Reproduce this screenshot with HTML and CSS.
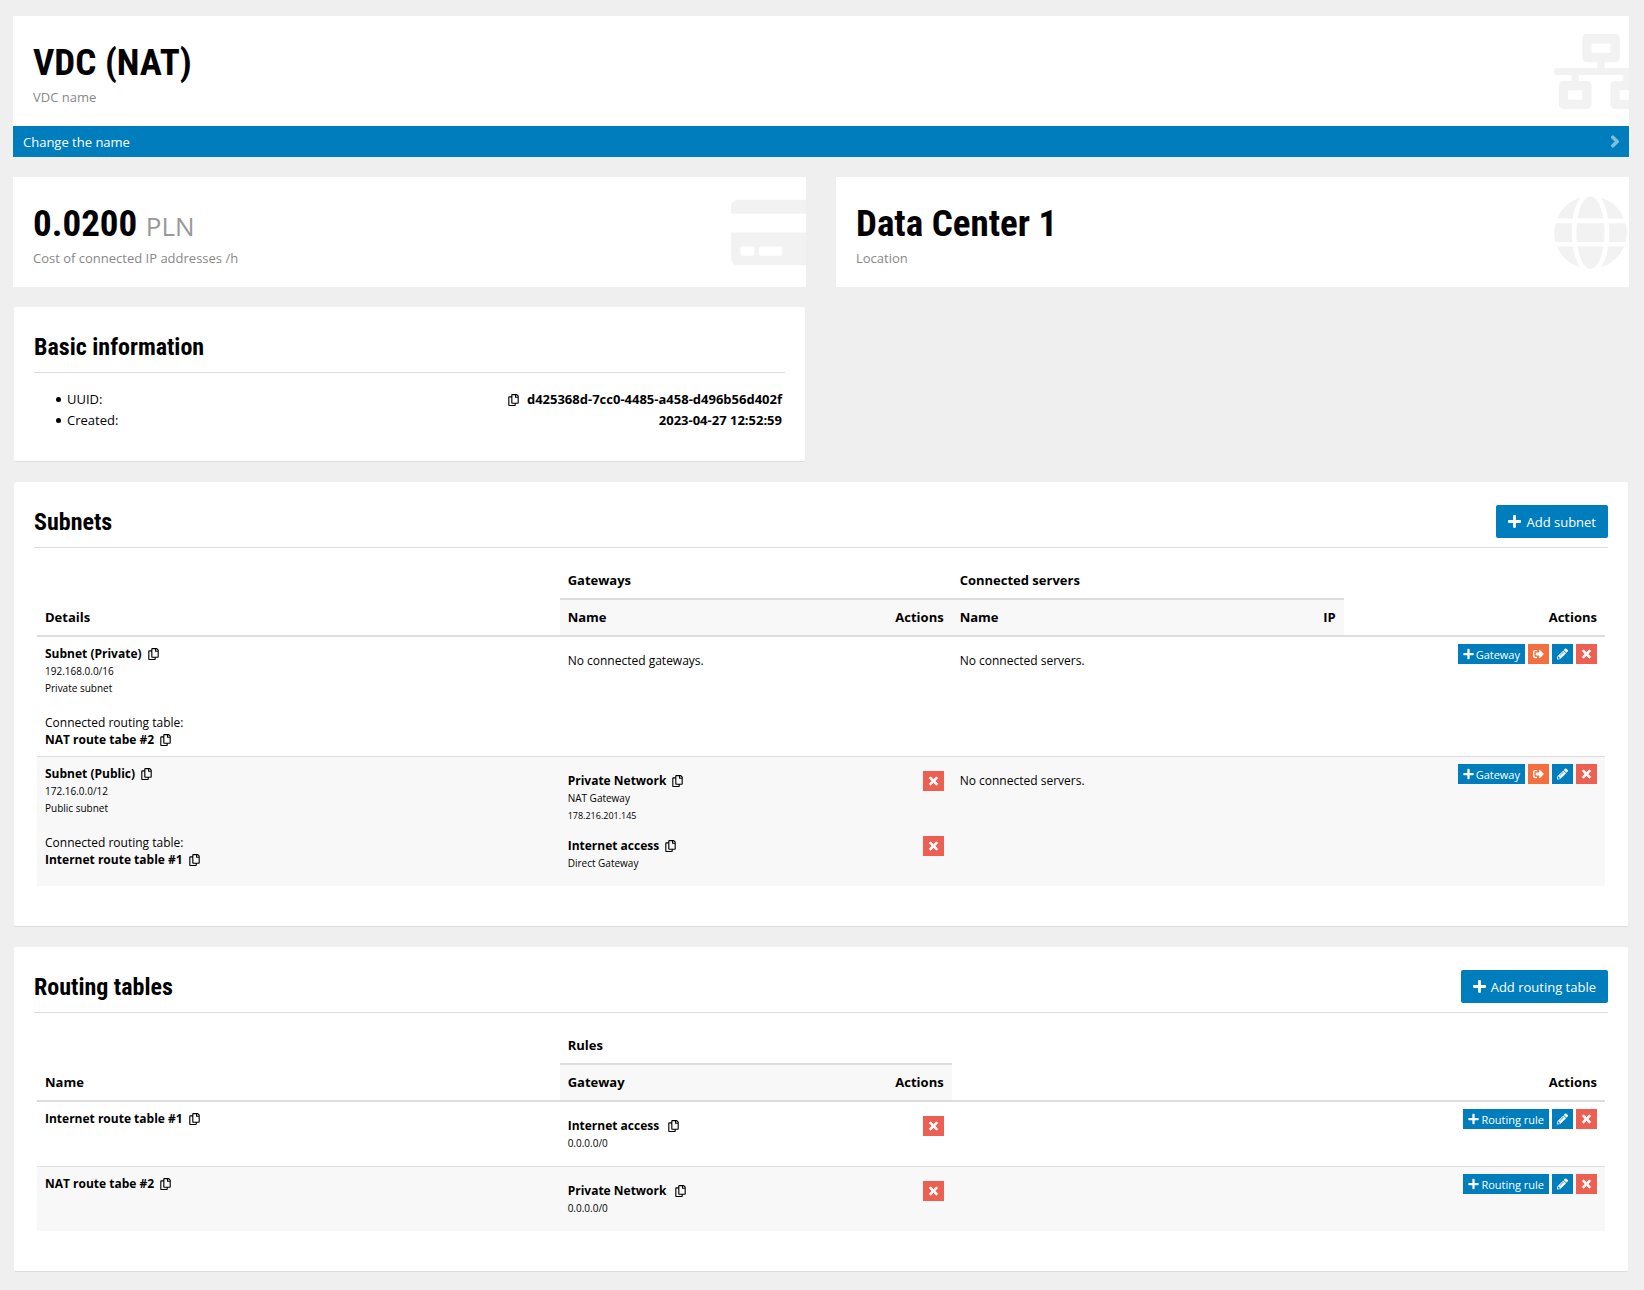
FILE: index.html
```html
<!DOCTYPE html>
<html lang="en">
<head>
<meta charset="utf-8">
<title>VDC (NAT)</title>
<meta name="viewport" content="width=device-width, initial-scale=1">
<link rel="stylesheet" href="styles.css">
</head>
<body>
<svg class="sprite" aria-hidden="true">
  <symbol id="i-network" viewBox="0 0 640 512"><path d="M640 264v-16c0-8.840-7.160-16-16-16H344v-40h72c17.670 0 32-14.330 32-32V32c0-17.670-14.330-32-32-32H224c-17.670 0-32 14.330-32 32v128c0 17.670 14.330 32 32 32h72v40H16c-8.840 0-16 7.160-16 16v16c0 8.840 7.160 16 16 16h104v40H64c-17.670 0-32 14.330-32 32v128c0 17.670 14.330 32 32 32h160c17.670 0 32-14.330 32-32V352c0-17.670-14.330-32-32-32h-56v-40h304v40h-56c-17.670 0-32 14.330-32 32v128c0 17.670 14.330 32 32 32h160c17.670 0 32-14.330 32-32V352c0-17.670-14.330-32-32-32h-56v-40h104c8.840 0 16-7.160 16-16zM256 128V64h128v64H256zm-64 320H96v-64h96v64zm352 0h-96v-64h96v64z"/></symbol>
  <symbol id="i-globe" viewBox="0 0 496 512"><path d="M336.500 160C322 70.700 287.800 8 248 8s-74 62.700-88.500 152h177zM152 256c0 22.200 1.200 43.500 3.300 64h185.300c2.100-20.500 3.300-41.800 3.300-64s-1.200-43.500-3.300-64H155.300c-2.100 20.500-3.300 41.800-3.300 64zm324.700-96c-28.600-67.900-86.500-120.400-158-141.600 24.400 33.800 41.200 84.700 50 141.600h108zM177.200 18.400C105.800 39.600 47.800 92.100 19.300 160h108c8.700-56.900 25.500-107.800 49.900-141.600zM487.400 192H372.700c2.100 21 3.300 42.500 3.300 64s-1.200 43-3.300 64h114.600c5.500-20.500 8.600-41.800 8.600-64s-3.100-43.500-8.500-64zM120 256c0-21.500 1.200-43 3.300-64H8.600C3.200 212.500 0 233.800 0 256s3.200 43.500 8.600 64h114.600c-2-21-3.200-42.500-3.200-64zm39.500 96c14.500 89.300 48.700 152 88.500 152s74-62.700 88.500-152h-177zm159.300 141.600c71.400-21.200 129.400-73.700 158-141.600h-108c-8.800 56.900-25.600 107.800-50 141.600zM19.300 352c28.600 67.900 86.500 120.400 158 141.600-24.400-33.800-41.200-84.700-50-141.600h-108z"/></symbol>
  <symbol id="i-card" viewBox="0 0 576 512"><path d="M0 432c0 26.500 21.500 48 48 48h480c26.500 0 48-21.500 48-48V256H0v176zm192-68c0-6.600 5.400-12 12-12h136c6.600 0 12 5.400 12 12v40c0 6.600-5.400 12-12 12H204c-6.600 0-12-5.400-12-12v-40zm-128 0c0-6.600 5.400-12 12-12h72c6.600 0 12 5.400 12 12v40c0 6.600-5.400 12-12 12H76c-6.600 0-12-5.400-12-12v-40zM576 80v48H0V80c0-26.500 21.500-48 48-48h480c26.500 0 48 21.500 48 48z"/></symbol>
  <symbol id="i-copy" viewBox="0 0 448 512"><path d="M433.941 65.941l-51.882-51.882A48 48 0 0 0 348.118 0H176c-26.510 0-48 21.490-48 48v48H48c-26.510 0-48 21.490-48 48v320c0 26.510 21.490 48 48 48h224c26.510 0 48-21.490 48-48v-48h80c26.510 0 48-21.490 48-48V99.882a48 48 0 0 0-14.059-33.941zM266 464H54a6 6 0 0 1-6-6V150a6 6 0 0 1 6-6h74v224c0 26.510 21.490 48 48 48h96v42a6 6 0 0 1-6 6zm128-96H182a6 6 0 0 1-6-6V54a6 6 0 0 1 6-6h106v88c0 13.255 10.745 24 24 24h88v202a6 6 0 0 1-6 6zm6-256h-64V48h9.632c1.591 0 3.117.632 4.243 1.757l48.368 48.368a6 6 0 0 1 1.757 4.243V112z"/></symbol>
  <symbol id="i-plus" viewBox="0 0 448 512"><path d="M416 208H272V64c0-17.670-14.330-32-32-32h-32c-17.670 0-32 14.330-32 32v144H32c-17.670 0-32 14.330-32 32v32c0 17.670 14.330 32 32 32h144v144c0 17.670 14.330 32 32 32h32c17.670 0 32-14.330 32-32V304h144c17.670 0 32-14.330 32-32v-32c0-17.670-14.330-32-32-32z"/></symbol>
  <symbol id="i-times" viewBox="0 0 352 512"><path stroke="currentColor" stroke-width="24" d="M242.720 256l100.070-100.070c12.280-12.280 12.280-32.190 0-44.480l-22.240-22.240c-12.280-12.280-32.190-12.280-44.480 0L176 189.280 75.930 89.210c-12.280-12.280-32.190-12.280-44.480 0L9.210 111.450c-12.280 12.280-12.280 32.190 0 44.480L109.280 256 9.210 356.070c-12.280 12.280-12.280 32.190 0 44.480l22.240 22.240c12.280 12.280 32.200 12.280 44.480 0L176 322.720l100.070 100.070c12.280 12.280 32.200 12.280 44.480 0l22.240-22.240c12.280-12.280 12.280-32.190 0-44.480L242.720 256z"/></symbol>
  <symbol id="i-pencil" viewBox="0 0 512 512"><path d="M497.900 142.100l-46.100 46.100c-4.700 4.700-12.300 4.700-17 0l-111-111c-4.700-4.700-4.700-12.300 0-17l46.100-46.100c18.700-18.700 49.100-18.700 67.900 0l60.100 60.100c18.800 18.700 18.800 49.100 0 67.900zM284.200 99.800L21.600 362.400.4 483.900c-2.900 16.400 11.400 30.600 27.800 27.800l121.500-21.300 262.600-262.600c4.700-4.700 4.700-12.300 0-17l-111-111c-4.800-4.700-12.400-4.700-17.100 0zM124.100 339.900c-5.500-5.500-5.500-14.300 0-19.800l154-154c5.500-5.500 14.300-5.500 19.800 0s5.500 14.300 0 19.800l-154 154c-5.500 5.500-14.300 5.500-19.800 0zM88 424h48v36.300l-64.500 11.300-31.100-31.100L51.700 376H88v48z"/></symbol>
  <symbol id="i-out" viewBox="0 0 512 512"><path d="M497 273L329 441c-15 15-41 4.500-41-17v-96H152c-13.300 0-24-10.700-24-24v-96c0-13.300 10.700-24 24-24h136V88c0-21.400 25.900-32 41-17l168 168c9.300 9.400 9.300 24.600 0 34zM192 436v-40c0-6.600-5.400-12-12-12H96c-17.700 0-32-14.300-32-32V160c0-17.700 14.300-32 32-32h84c6.600 0 12-5.400 12-12V76c0-6.600-5.400-12-12-12H96c-53 0-96 43-96 96v192c0 53 43 96 96 96h84c6.600 0 12-5.400 12-12z"/></symbol>
  <symbol id="i-chevron" viewBox="0 0 320 512"><path stroke="currentColor" stroke-width="60" d="M285.476 272.971L91.132 467.314c-9.373 9.373-24.569 9.373-33.941 0l-22.667-22.667c-9.357-9.357-9.375-24.522-.04-33.901L188.505 256 34.484 101.255c-9.335-9.379-9.317-24.544.04-33.901l22.667-22.667c9.373-9.373 24.569-9.373 33.941 0L285.475 239.030c9.373 9.372 9.373 24.568.001 33.941z"/></symbol>
</svg>

<main class="page">
  <section class="tile">
    <div class="tile-body">
      <h1 class="tile-value">VDC (NAT)</h1>
      <p class="tile-label">VDC name</p>
      <svg class="tile-icon tile-icon-network" aria-hidden="true"><use href="#i-network"/></svg>
    </div>
    <a class="tile-link" href="#rename">Change the name <svg class="icon-chevron" aria-hidden="true"><use href="#i-chevron"/></svg></a>
  </section>

  <div class="columns">
    <section class="tile">
      <div class="tile-body">
        <p class="tile-value">0.0200 <span class="unit">PLN</span></p>
        <p class="tile-label">Cost of connected IP addresses /h</p>
        <svg class="tile-icon tile-icon-card" aria-hidden="true"><use href="#i-card"/></svg>
      </div>
    </section>
    <section class="tile">
      <div class="tile-body">
        <p class="tile-value">Data Center 1</p>
        <p class="tile-label">Location</p>
        <svg class="tile-icon tile-icon-globe" aria-hidden="true"><use href="#i-globe"/></svg>
      </div>
    </section>
  </div>

  <div class="columns">
    <section class="panel panel-info">
      <header class="panel-head"><h2>Basic information</h2></header>
      <ul class="facts">
        <li><span>UUID:</span><span class="fact-value"><button class="copy" type="button" aria-label="Copy UUID"><svg><use href="#i-copy"/></svg></button><b>d425368d-7cc0-4485-a458-d496b56d402f</b></span></li>
        <li><span>Created:</span><b class="fact-value">2023-04-27 12:52:59</b></li>
      </ul>
    </section>
  </div>

  <section class="panel">
    <header class="panel-head">
      <h2>Subnets</h2>
      <button class="btn" type="button"><svg><use href="#i-plus"/></svg>Add subnet</button>
    </header>
    <table class="grid">
      <colgroup><col class="w-third"><col class="w-eighth"><col class="w-eighth"><col class="w-eighth"><col class="w-eighth"><col></colgroup>
      <thead>
        <tr>
          <th rowspan="2">Details</th>
          <th colspan="2">Gateways</th>
          <th colspan="2">Connected servers</th>
          <th rowspan="2" class="right">Actions</th>
        </tr>
        <tr class="sub">
          <th>Name</th><th class="right">Actions</th>
          <th>Name</th><th class="right">IP</th>
        </tr>
      </thead>
      <tbody>
        <tr>
          <td>
            <div class="name"><b>Subnet (Private)</b><button class="copy" type="button" aria-label="Copy"><svg><use href="#i-copy"/></svg></button></div>
            <div class="small">192.168.0.0/16</div>
            <div class="small">Private subnet</div>
            <div class="linked">Connected routing table:</div>
            <div class="name"><b>NAT route tabe #2</b><button class="copy" type="button" aria-label="Copy"><svg><use href="#i-copy"/></svg></button></div>
          </td>
          <td colspan="2"><div class="entry"><div class="entry-text">No connected gateways.</div></div></td>
          <td colspan="2"><div class="entry"><div class="entry-text">No connected servers.</div></div></td>
          <td class="actions-cell">
            <div class="actions">
              <button class="mini" type="button"><svg><use href="#i-plus"/></svg>Gateway</button>
              <button class="mini orange" type="button" aria-label="Disconnect"><svg><use href="#i-out"/></svg></button>
              <button class="mini" type="button" aria-label="Edit"><svg><use href="#i-pencil"/></svg></button>
              <button class="mini red" type="button" aria-label="Delete"><svg><use href="#i-times"/></svg></button>
            </div>
          </td>
        </tr>
        <tr>
          <td>
            <div class="name"><b>Subnet (Public)</b><button class="copy" type="button" aria-label="Copy"><svg><use href="#i-copy"/></svg></button></div>
            <div class="small">172.16.0.0/12</div>
            <div class="small">Public subnet</div>
            <div class="linked">Connected routing table:</div>
            <div class="name"><b>Internet route table #1</b><button class="copy" type="button" aria-label="Copy"><svg><use href="#i-copy"/></svg></button></div>
          </td>
          <td colspan="2">
            <div class="entry">
              <div class="entry-text">
                <div class="name"><b>Private Network</b><button class="copy" type="button" aria-label="Copy"><svg><use href="#i-copy"/></svg></button></div>
                <div class="small">NAT Gateway</div>
                <div class="tiny">178.216.201.145</div>
              </div>
              <button class="mini red" type="button" aria-label="Delete"><svg><use href="#i-times"/></svg></button>
            </div>
            <div class="entry">
              <div class="entry-text">
                <div class="name"><b>Internet access</b><button class="copy" type="button" aria-label="Copy"><svg><use href="#i-copy"/></svg></button></div>
                <div class="small">Direct Gateway</div>
              </div>
              <button class="mini red" type="button" aria-label="Delete"><svg><use href="#i-times"/></svg></button>
            </div>
          </td>
          <td colspan="2"><div class="entry"><div class="entry-text">No connected servers.</div></div></td>
          <td class="actions-cell">
            <div class="actions">
              <button class="mini" type="button"><svg><use href="#i-plus"/></svg>Gateway</button>
              <button class="mini orange" type="button" aria-label="Disconnect"><svg><use href="#i-out"/></svg></button>
              <button class="mini" type="button" aria-label="Edit"><svg><use href="#i-pencil"/></svg></button>
              <button class="mini red" type="button" aria-label="Delete"><svg><use href="#i-times"/></svg></button>
            </div>
          </td>
        </tr>
      </tbody>
    </table>
  </section>

  <section class="panel">
    <header class="panel-head">
      <h2>Routing tables</h2>
      <button class="btn" type="button"><svg><use href="#i-plus"/></svg>Add routing table</button>
    </header>
    <table class="grid">
      <colgroup><col class="w-third"><col class="w-eighth"><col class="w-eighth"><col></colgroup>
      <thead>
        <tr>
          <th rowspan="2">Name</th>
          <th colspan="2">Rules</th>
          <th rowspan="2" class="right">Actions</th>
        </tr>
        <tr class="sub"><th>Gateway</th><th class="right">Actions</th></tr>
      </thead>
      <tbody>
        <tr>
          <td><div class="name"><b>Internet route table #1</b><button class="copy" type="button" aria-label="Copy"><svg><use href="#i-copy"/></svg></button></div></td>
          <td colspan="2">
            <div class="entry">
              <div class="entry-text">
                <div class="name name-wide"><b>Internet access</b><button class="copy" type="button" aria-label="Copy"><svg><use href="#i-copy"/></svg></button></div>
                <div class="small">0.0.0.0/0</div>
              </div>
              <button class="mini red" type="button" aria-label="Delete"><svg><use href="#i-times"/></svg></button>
            </div>
          </td>
          <td class="actions-cell">
            <div class="actions">
              <button class="mini" type="button"><svg><use href="#i-plus"/></svg>Routing rule</button>
              <button class="mini" type="button" aria-label="Edit"><svg><use href="#i-pencil"/></svg></button>
              <button class="mini red" type="button" aria-label="Delete"><svg><use href="#i-times"/></svg></button>
            </div>
          </td>
        </tr>
        <tr>
          <td><div class="name"><b>NAT route tabe #2</b><button class="copy" type="button" aria-label="Copy"><svg><use href="#i-copy"/></svg></button></div></td>
          <td colspan="2">
            <div class="entry">
              <div class="entry-text">
                <div class="name name-wide"><b>Private Network</b><button class="copy" type="button" aria-label="Copy"><svg><use href="#i-copy"/></svg></button></div>
                <div class="small">0.0.0.0/0</div>
              </div>
              <button class="mini red" type="button" aria-label="Delete"><svg><use href="#i-times"/></svg></button>
            </div>
          </td>
          <td class="actions-cell">
            <div class="actions">
              <button class="mini" type="button"><svg><use href="#i-plus"/></svg>Routing rule</button>
              <button class="mini" type="button" aria-label="Edit"><svg><use href="#i-pencil"/></svg></button>
              <button class="mini red" type="button" aria-label="Delete"><svg><use href="#i-times"/></svg></button>
            </div>
          </td>
        </tr>
      </tbody>
    </table>
  </section>
</main>
</body>
</html>
```
FILE: styles.css
```css
* { box-sizing: border-box; }

body {
  margin: 0;
  background: #efefef;
  color: #000;
  font-family: "Open Sans", "Noto Sans", sans-serif;
  font-size: 13px;
  line-height: 20px;
}

h1, h2, p, ul { margin: 0; }
button { font-family: inherit; border: 0; cursor: pointer; }
svg { fill: currentColor; }
.sprite { display: none; }

.page {
  display: flex;
  flex-direction: column;
  gap: 20px;
  padding: 16px 15px 0 13px;
}

.columns {
  display: grid;
  grid-template-columns: 1fr 1fr;
  gap: 30px;
}

/* Summary tiles */
.tile { background: #fff; }
.tile-body {
  position: relative;
  overflow: hidden;
  padding: 26px 20px 19px;
}
.tile-value {
  margin-bottom: 3px;
  font-family: "Roboto Condensed", "Liberation Sans Narrow", sans-serif;
  font-size: 37px;
  font-weight: 700;
  line-height: 42px;
}
.unit {
  color: #999;
  font-family: "Open Sans", sans-serif;
  font-size: 26px;
  font-weight: 400;
  line-height: 26px;
}
.tile-label { color: #888; }
.tile-icon {
  position: absolute;
  top: 18px;
  left: calc(100% - 75px);
  height: 75px;
  color: #f2f2f2;
}
.tile-icon-network { width: 94px; }
.tile-icon-card { width: 84px; }
.tile-icon-globe { width: 73px; }

.tile-link {
  display: flex;
  align-items: center;
  justify-content: space-between;
  height: 31px;
  padding: 0 10px;
  background: #007dbc;
  color: #fff;
  text-decoration: none;
}
.icon-chevron { width: 8px; height: 13px; opacity: 0.5; }

/* Panels */
.panel {
  margin: 0 1px;
  padding: 0 20px 40px;
  background: #fff;
  border-bottom: 1px solid #dcdcdc;
  border-radius: 2px;
}
.panel-info { padding-bottom: 30px; }
.panel-head {
  display: flex;
  align-items: center;
  justify-content: space-between;
  min-height: 66px;
  padding: 23px 0 9px;
  border-bottom: 1px solid #ddd;
}
.panel-head h2 {
  font-family: "Roboto Condensed", "Liberation Sans Narrow", sans-serif;
  font-size: 24px;
  font-weight: 700;
  line-height: 28px;
}
.btn {
  display: flex;
  align-items: center;
  gap: 5px;
  height: 33px;
  padding: 0 12px;
  border-radius: 2px;
  background: #007dbc;
  color: #fff;
  font-size: 13px;
}
.btn svg { width: 13px; height: 15px; }

.facts {
  padding: 16px 3px 0 22px;
  line-height: 21px;
  list-style: none;
}
.facts li { display: flex; align-items: center; gap: 6px; }
.facts li::before {
  width: 5px;
  height: 5px;
  border-radius: 50%;
  background: #000;
  content: "";
}
.fact-value { display: flex; align-items: center; gap: 8px; margin-left: auto; }

.copy {
  display: inline-flex;
  padding: 0;
  background: none;
  color: #000;
}
.copy svg { width: 11px; height: 12px; }

/* Tables */
.grid {
  width: calc(100% - 6px);
  margin: 15px 3px 0;
  border-spacing: 0;
  table-layout: fixed;
}
.w-third { width: 33.3333%; }
.w-eighth { width: 12.5%; }

.grid th {
  padding: 8px;
  border-bottom: 2px solid #ddd;
  line-height: 19px;
  text-align: left;
  vertical-align: bottom;
}
.grid th.right { text-align: right; }
.grid .sub th { background: #f8f8f8; }

.grid td {
  padding: 8px;
  font-size: 12px;
  line-height: 17px;
  vertical-align: top;
}
.grid tbody tr + tr td { border-top: 1px solid #ddd; background: #f8f8f8; }

.name { display: flex; align-items: center; gap: 6px; }
.name-wide { gap: 9px; }
.small { font-size: 10px; }
.tiny { font-size: 9px; }
.name + .small { margin-top: 1px; }
.linked { margin-top: 17px; }

.entry {
  display: flex;
  align-items: flex-start;
  justify-content: space-between;
  padding: 6px 0;
}
.entry-text { padding-top: 1px; }

.grid .actions-cell { padding-top: 7px; }
.actions { display: flex; justify-content: flex-end; gap: 3px; }
.mini {
  display: flex;
  align-items: center;
  justify-content: center;
  gap: 2px;
  min-width: 21px;
  height: 20px;
  padding: 0 5px;
  background: #007dbc;
  color: #fff;
  font-size: 11px;
}
.mini svg { width: 11px; height: 12px; }
.mini.orange { background: #f36f40; }
.mini.red { background: #eb6053; }
```
